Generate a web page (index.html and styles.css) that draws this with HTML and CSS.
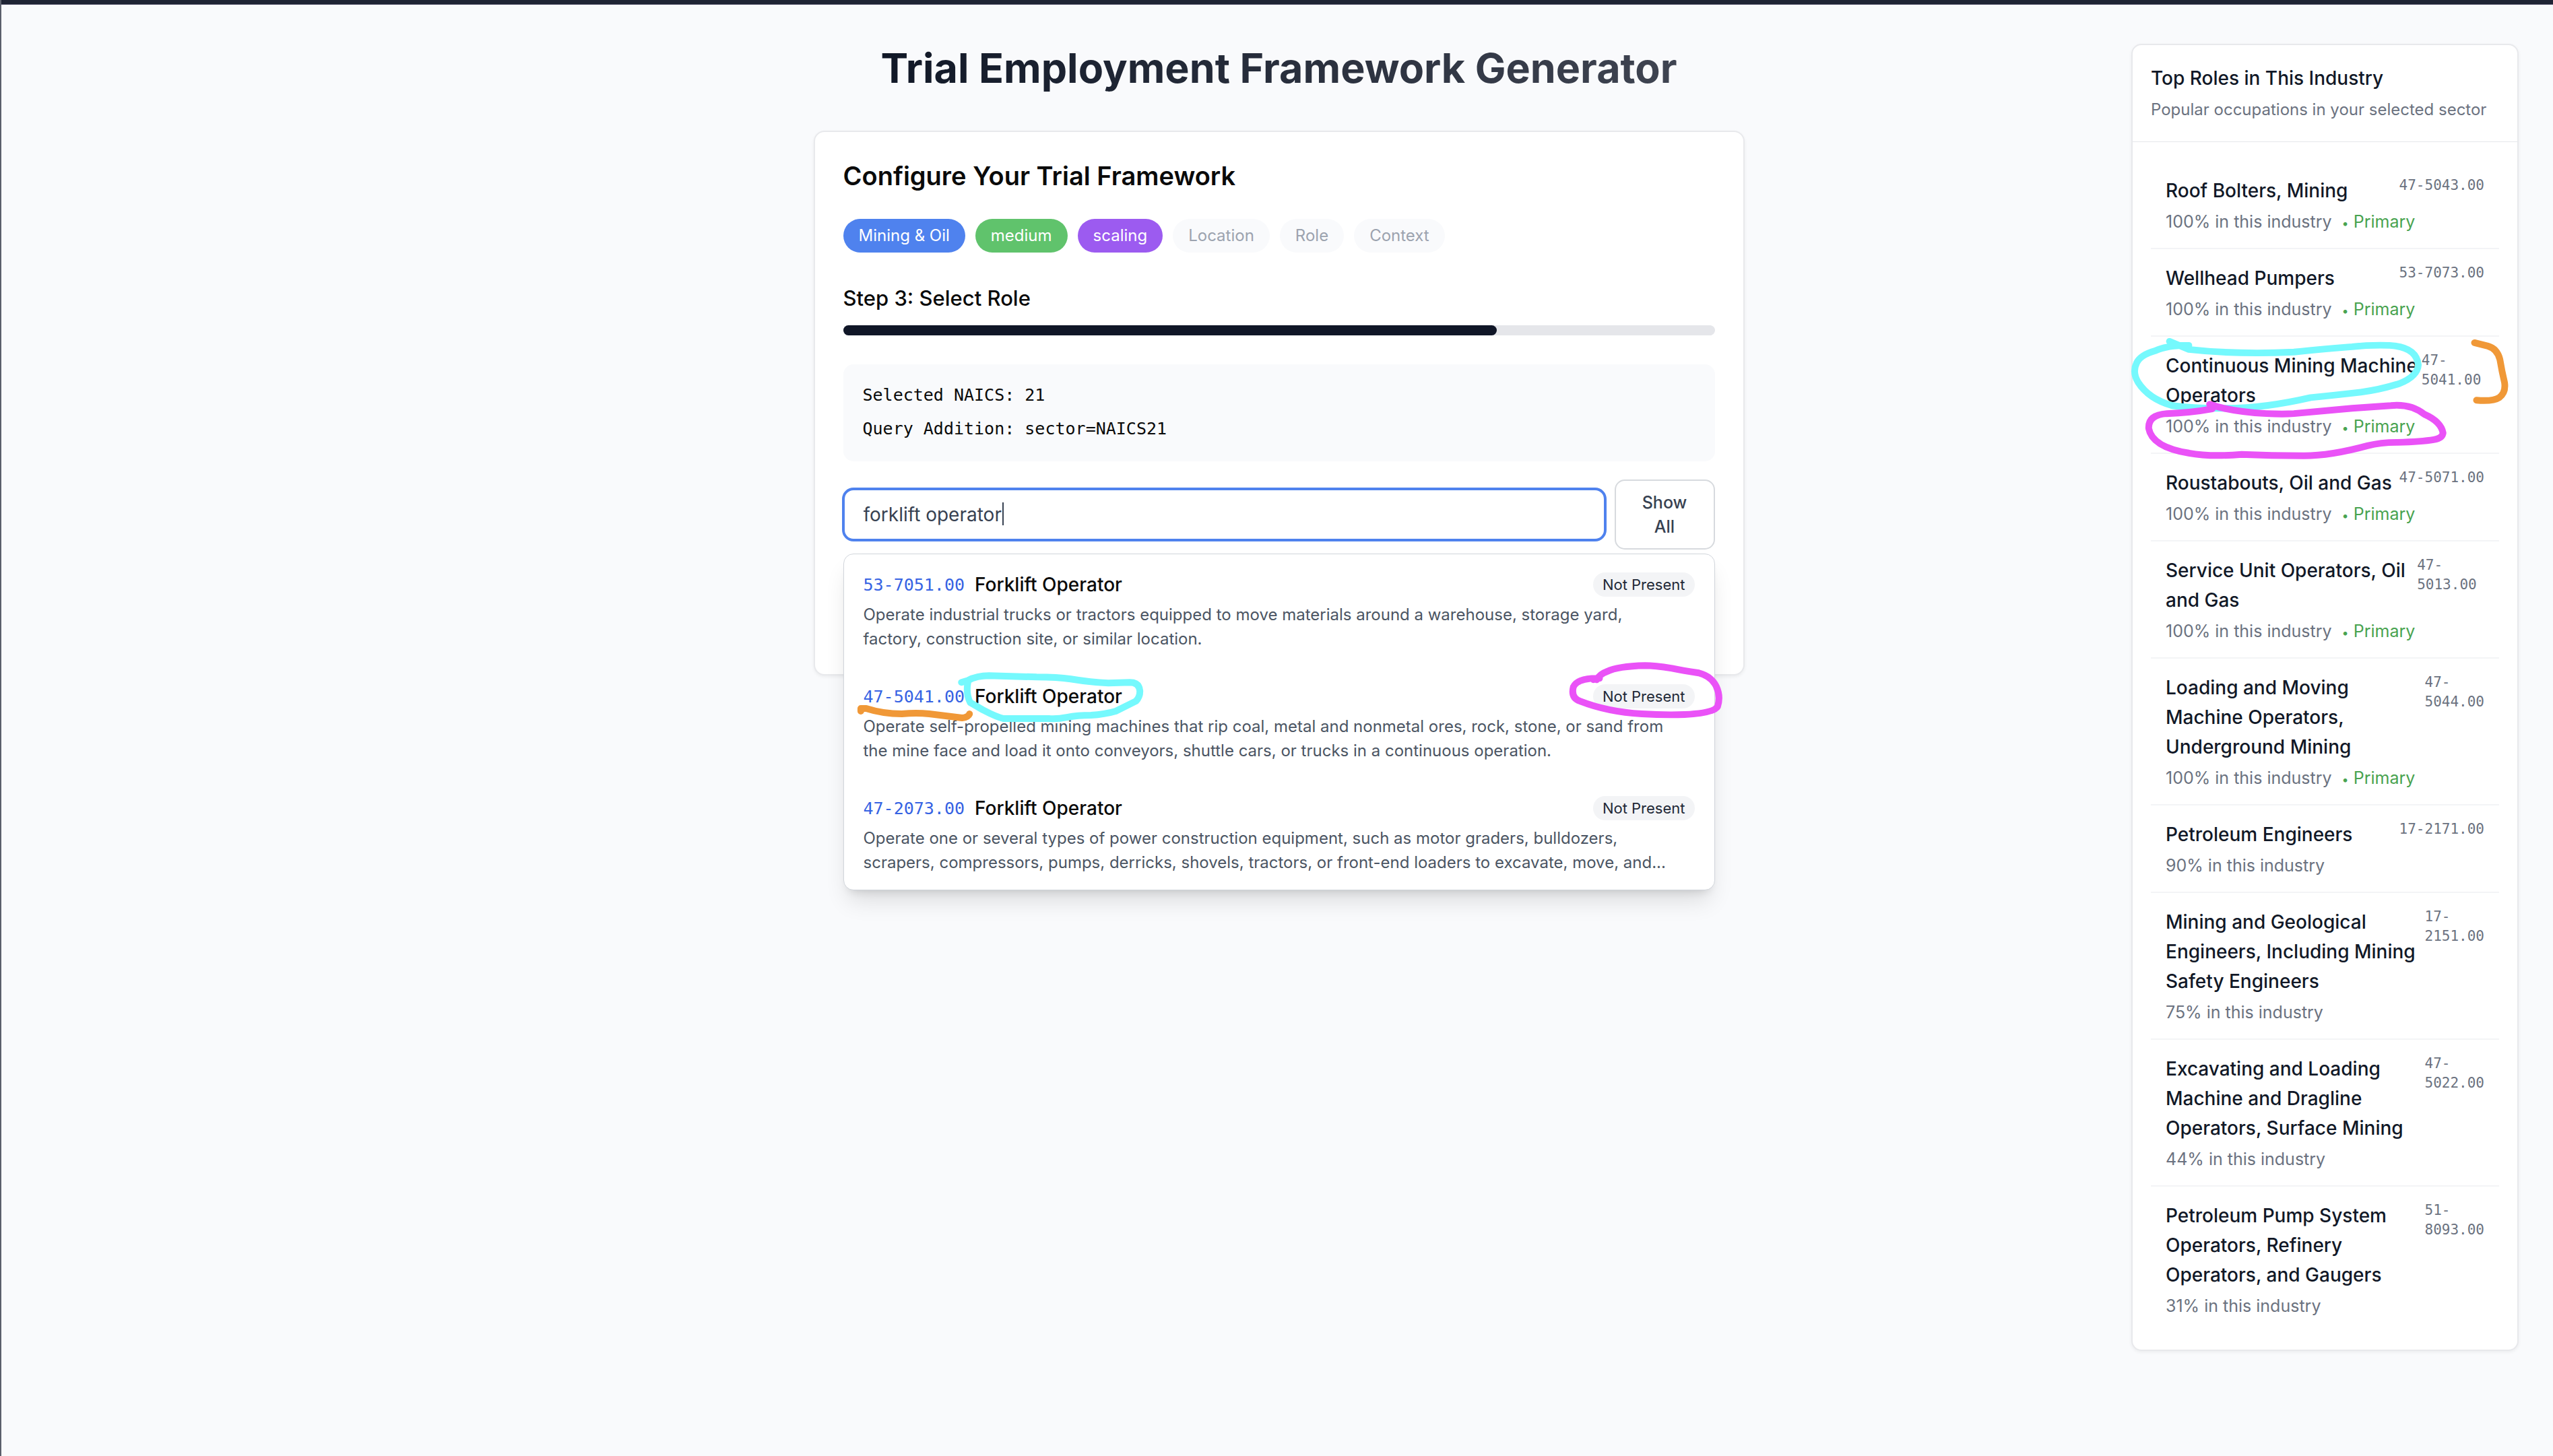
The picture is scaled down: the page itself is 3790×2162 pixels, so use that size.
FILE: index.html
```html
<!DOCTYPE html>
<html lang="en">
<head>
<meta charset="utf-8">
<meta name="viewport" content="width=device-width, initial-scale=1">
<title>Trial Employment Framework Generator</title>
<link rel="stylesheet" href="styles.css">
</head>
<body>
<div class="topbar"></div>
<div class="shell">
  <main class="main">
    <h1 class="page-title">Trial Employment Framework Generator</h1>
    <section class="card">
      <h2 class="card-title">Configure Your Trial Framework</h2>
      <div class="chips">
        <span class="chip chip-blue">Mining &amp; Oil</span>
        <span class="chip chip-green">medium</span>
        <span class="chip chip-purple">scaling</span>
        <span class="chip">Location</span>
        <span class="chip">Role</span>
        <span class="chip">Context</span>
      </div>
      <h3 class="step">Step 3: Select Role</h3>
      <div class="progress"><div class="progress-fill" style="width: 75%"></div></div>
      <div class="query">
        <p>Selected NAICS: 21</p>
        <p>Query Addition: sector=NAICS21</p>
      </div>
      <div class="search">
        <div class="search-row">
          <div class="field">
            <input class="search-input" type="text" aria-label="Search roles" value="forklift operator">
            <span class="caret"></span>
          </div>
          <button class="show-all" type="button">Show All</button>
        </div>
        <div class="dropdown">
          <div class="option">
            <div class="option-head">
              <span class="option-code">53-7051.00</span>
              <span class="option-name">Forklift Operator</span>
              <span class="badge">Not Present</span>
            </div>
            <p class="option-text">Operate industrial trucks or tractors equipped to move materials around a warehouse, storage yard, factory, construction site, or similar location.</p>
          </div>
          <div class="option">
            <div class="option-head">
              <span class="option-code">47-5041.00</span>
              <span class="option-name">Forklift Operator</span>
              <span class="badge">Not Present</span>
            </div>
            <p class="option-text">Operate self-propelled mining machines that rip coal, metal and nonmetal ores, rock, stone, or sand from the mine face and load it onto conveyors, shuttle cars, or trucks in a continuous operation.</p>
          </div>
          <div class="option">
            <div class="option-head">
              <span class="option-code">47-2073.00</span>
              <span class="option-name">Forklift Operator</span>
              <span class="badge">Not Present</span>
            </div>
            <p class="option-text">Operate one or several types of power construction equipment, such as motor graders, bulldozers, scrapers, compressors, pumps, derricks, shovels, tractors, or front-end loaders to excavate, move, and...</p>
          </div>
          <svg class="marks" viewBox="1252 823 1294 500" preserveAspectRatio="xMinYMin meet" aria-hidden="true">
            <path class="mark cyan" d="M1427 1014L1437 1011Q1450 1004 1468 1004L1539 1006Q1570 1006 1590 1009Q1620 1014 1646 1015L1678 1014Q1692 1014 1693 1027Q1693 1036 1687 1042L1657 1057Q1640 1062 1620 1063Q1600 1063 1584 1066Q1570 1069 1557 1068H1490Q1480 1066 1459 1055L1440 1044Q1433 1030 1437 1012"/>
            <path class="mark orange" d="M1277 1057V1053L1285 1053Q1310 1061 1338 1061Q1360 1059 1379 1061L1428 1067Q1437 1066 1439 1061"/>
            <path class="mark magenta" d="M2369 1010L2378 1008Q2345 1007 2339 1021Q2335 1037 2349 1042Q2390 1058 2441 1061Q2475 1063 2505 1062Q2548 1060 2554 1050Q2559 1035 2552 1020Q2545 1005 2526 1000Q2500 996 2486 993Q2460 989 2446 989Q2405 990 2389 998Q2378 1002 2374 1010"/>
          </svg>
        </div>
      </div>
    </section>
  </main>
  <aside class="sidebar">
    <header class="sidebar-head">
      <h2 class="sidebar-title">Top Roles in This Industry</h2>
      <p class="sidebar-sub">Popular occupations in your selected sector</p>
    </header>
    <ul class="roles">
      <li class="role">
        <div class="role-row"><h3 class="role-name">Roof Bolters, Mining</h3><span class="role-code">47-5043.00</span></div>
        <p class="role-info">100% in this industry <span class="primary"><span class="dot">•</span> Primary</span></p>
      </li>
      <li class="role">
        <div class="role-row"><h3 class="role-name">Wellhead Pumpers</h3><span class="role-code">53-7073.00</span></div>
        <p class="role-info">100% in this industry <span class="primary"><span class="dot">•</span> Primary</span></p>
      </li>
      <li class="role">
        <div class="role-row"><h3 class="role-name">Continuous Mining Machine Operators</h3><span class="role-code">47-5041.00</span></div>
        <p class="role-info">100% in this industry <span class="primary"><span class="dot">•</span> Primary</span></p>
      </li>
      <li class="role">
        <div class="role-row"><h3 class="role-name">Roustabouts, Oil and Gas</h3><span class="role-code">47-5071.00</span></div>
        <p class="role-info">100% in this industry <span class="primary"><span class="dot">•</span> Primary</span></p>
      </li>
      <li class="role">
        <div class="role-row"><h3 class="role-name">Service Unit Operators, Oil and Gas</h3><span class="role-code">47-5013.00</span></div>
        <p class="role-info">100% in this industry <span class="primary"><span class="dot">•</span> Primary</span></p>
      </li>
      <li class="role">
        <div class="role-row"><h3 class="role-name">Loading and Moving Machine Operators, Underground Mining</h3><span class="role-code">47-5044.00</span></div>
        <p class="role-info">100% in this industry <span class="primary"><span class="dot">•</span> Primary</span></p>
      </li>
      <li class="role">
        <div class="role-row"><h3 class="role-name">Petroleum Engineers</h3><span class="role-code">17-2171.00</span></div>
        <p class="role-info">90% in this industry</p>
      </li>
      <li class="role">
        <div class="role-row"><h3 class="role-name">Mining and Geological Engineers, Including Mining Safety Engineers</h3><span class="role-code">17-2151.00</span></div>
        <p class="role-info">75% in this industry</p>
      </li>
      <li class="role">
        <div class="role-row"><h3 class="role-name">Excavating and Loading Machine and Dragline Operators, Surface Mining</h3><span class="role-code">47-5022.00</span></div>
        <p class="role-info">44% in this industry</p>
      </li>
      <li class="role">
        <div class="role-row"><h3 class="role-name">Petroleum Pump System Operators, Refinery Operators, and Gaugers</h3><span class="role-code">51-8093.00</span></div>
        <p class="role-info">31% in this industry</p>
      </li>
    </ul>
    <svg class="marks" viewBox="3164 65 575 1940" preserveAspectRatio="xMinYMin meet" aria-hidden="true">
      <path class="mark cyan" d="M3219 508L3230 514L3248 514Q3215 514 3198 522Q3176 528 3170 540Q3163 554 3172 569Q3188 594 3223 604Q3260 609 3306 608Q3360 608 3430 592Q3470 588 3505 584Q3535 580 3563 571Q3590 560 3591 543Q3588 516 3548 514Q3520 513 3492 516Q3440 520 3405 524Q3320 528 3248 520L3219 508"/>
      <path class="mark magenta" d="M3279 602Q3310 613 3364 616Q3390 617 3405 616L3492 608Q3520 606 3550 604Q3580 601 3600 617Q3625 628 3628 645Q3627 653 3614 655Q3596 658 3560 659Q3535 659 3515 664Q3460 679 3420 679Q3370 679 3327 677Q3280 681 3248 675Q3193 666 3188 638Q3187 618 3215 616Q3250 615 3283 609"/>
      <path class="mark orange" d="M3675 510L3695 515Q3709 519 3713 535Q3716 553 3720 570Q3722 585 3712 592Q3703 598 3678 596"/>
    </svg>
  </aside>
</div>
</body>
</html>
```
FILE: styles.css
```css
* { box-sizing: border-box; }

body {
  margin: 0;
  min-height: 100vh;
  border-left: 2px solid #5b5f6b;
  background: #f9fafc;
  color: #0a0a0a;
  font-family: Inter, "Liberation Sans", sans-serif;
}

h1, h2, h3, p, ul { margin: 0; padding: 0; }

.topbar {
  height: 7px;
  background: #1f2434;
  border-bottom: 1px solid #4a4960;
}

.shell {
  display: grid;
  grid-template-columns: 575px minmax(0, 1fr) 575px;
  align-items: start;
  padding: 58px 51px 58px 56px;
}

.main {
  grid-column: 2;
  width: 100%;
  max-width: 1382px;
  margin: 0 auto;
}

.page-title {
  width: fit-content;
  margin: 0 auto 57px;
  font-size: 61px;
  line-height: 72px;
  font-weight: 700;
  color: transparent;
  background: linear-gradient(to right, #111827, #3f4451);
  background-clip: text;
  -webkit-background-clip: text;
}

.card {
  padding: 40px 42px 42px;
  border: 2px solid #e8e9ec;
  border-radius: 16px;
  background: #fff;
  box-shadow: 0 2px 5px rgba(0, 0, 0, 0.06);
}

.card-title {
  font-size: 38px;
  line-height: 50px;
  font-weight: 600;
}

.chips {
  display: flex;
  flex-wrap: wrap;
  gap: 15px;
  margin-top: 39px;
}

.chip {
  padding: 0 23px;
  border-radius: 25px;
  background: #f9fafc;
  color: #9ca3af;
  font-size: 24px;
  line-height: 50px;
}

.chip-blue { background: #4f82ee; color: #fff; }
.chip-green { background: #60c36c; color: #fff; }
.chip-purple { background: #9c5bf0; color: #fff; }

.step {
  margin-top: 46px;
  font-size: 31px;
  line-height: 44px;
  font-weight: 500;
}

.progress {
  height: 15px;
  margin-top: 18px;
  border-radius: 8px;
  background: #e5e6ea;
}

.progress-fill {
  height: 100%;
  border-radius: 8px;
  background: #101627;
}

.query {
  margin-top: 43px;
  padding: 21px 29px 23px;
  border-radius: 15px;
  background: #f9fafc;
  font-family: "DejaVu Sans Mono", monospace;
  font-size: 25px;
  line-height: 50px;
}

.search {
  position: relative;
  margin-top: 27px;
  padding-bottom: 143px;
}

.search-row {
  display: flex;
  align-items: center;
  gap: 14px;
}

.field {
  position: relative;
  flex: 1;
  display: flex;
}

.search-input {
  flex: 1;
  min-width: 0;
  height: 76px;
  padding: 0 28px;
  border: 2px solid #4f82ee;
  border-radius: 15px;
  outline: none;
  box-shadow: 0 0 0 2px #4f82ee;
  background: #fff;
  color: #374151;
  font: 400 28px/40px Inter, "Liberation Sans", sans-serif;
}

.caret {
  position: absolute;
  left: 236px;
  top: 20px;
  width: 2px;
  height: 34px;
  background: #374151;
}

.show-all {
  width: 149px;
  padding: 14px 36px;
  border: 2px solid #d7dade;
  border-radius: 15px;
  background: #fff;
  color: #374151;
  font: 500 25px/36px Inter, "Liberation Sans", sans-serif;
}

.dropdown {
  position: absolute;
  top: 110px;
  left: 0;
  right: 0;
  border: 1px solid #d1d5db;
  border-radius: 15px;
  background: #fff;
  box-shadow: 0 22px 34px -7px rgba(0, 0, 0, 0.12), 0 9px 14px -9px rgba(0, 0, 0, 0.16);
}

.option { padding: 22px 29px; }

.option-head {
  display: flex;
  align-items: center;
  height: 46px;
  margin-bottom: 4px;
}

.option-code {
  color: #3663e3;
  font-family: "DejaVu Sans Mono", monospace;
  font-size: 25px;
}

.option-name {
  margin-left: 15px;
  font-size: 28px;
  font-weight: 500;
}

.badge {
  margin-left: auto;
  padding: 0 14px;
  border-radius: 18px;
  background: #f3f4f6;
  color: #1f2937;
  font-size: 22px;
  line-height: 36px;
}

.option-text {
  padding-right: 28px;
  color: #4b5563;
  font-size: 24px;
  line-height: 36px;
}

.sidebar {
  position: relative;
  grid-column: 3;
  border: 2px solid #e8e9ec;
  border-radius: 15px;
  background: #fff;
  box-shadow: 0 2px 5px rgba(0, 0, 0, 0.06);
}

.sidebar-head {
  padding: 27px 27px 29px;
  border-bottom: 1px solid #e5e7eb;
}

.sidebar-title {
  color: #111827;
  font-size: 28px;
  line-height: 44px;
  font-weight: 500;
}

.sidebar-sub {
  margin-top: 7px;
  color: #6b7280;
  font-size: 24px;
  line-height: 36px;
}

.roles {
  padding: 29px 27px 26px;
  list-style: none;
}

.role {
  padding: 21px 22px;
  border-bottom: 2px solid #f3f4f6;
}

.role:last-child { border-bottom: 0; }

.role-row {
  display: flex;
  justify-content: space-between;
  align-items: flex-start;
}

.role-name {
  color: #111827;
  font-size: 28px;
  line-height: 44px;
  font-weight: 500;
}

.role-code {
  color: #6b7280;
  font-family: "DejaVu Sans Mono", monospace;
  font-size: 21px;
  line-height: 29px;
}

.role-info {
  margin-top: 6px;
  color: #6b7280;
  font-size: 25px;
  line-height: 36px;
}

.primary {
  margin-left: 8px;
  color: #49a350;
}

.dot {
  font-size: 18px;
  line-height: 1;
}

.marks {
  position: absolute;
  inset: 0;
  width: 100%;
  height: 100%;
  overflow: visible;
  pointer-events: none;
}

.mark {
  fill: none;
  stroke-width: 10px;
  stroke-linecap: round;
  stroke-linejoin: round;
}

.cyan { stroke: #75f9fd; }
.magenta { stroke: #ea52f7; }
.orange { stroke: #f09837; }
```
